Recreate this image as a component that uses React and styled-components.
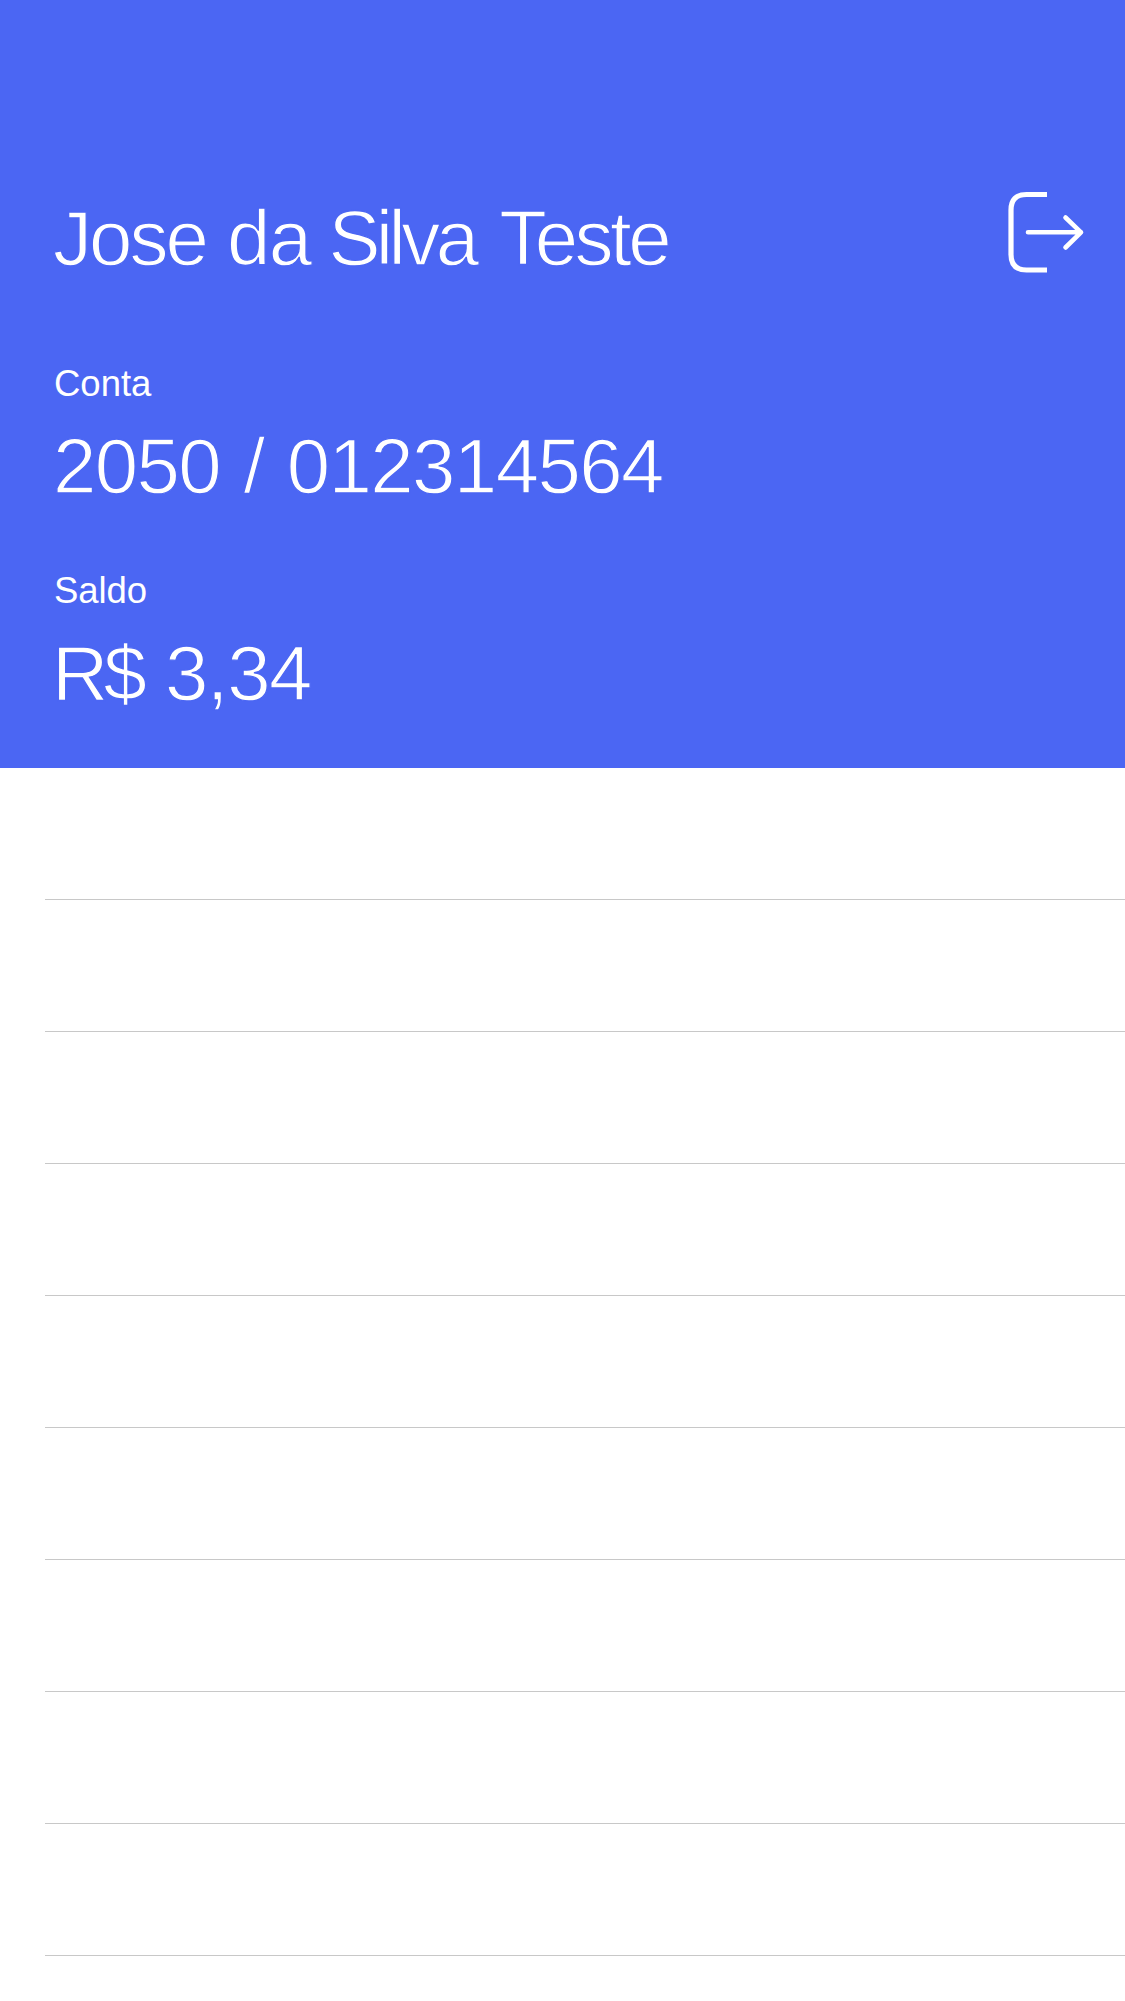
import React from "react";
import styled, { createGlobalStyle } from "styled-components";

const BLUE = "#4b66f3";

const GlobalStyle = createGlobalStyle`
  * { box-sizing: border-box; }
  body { margin: 0; background: #fff; }
`;

const Screen = styled.main`
  display: flex;
  flex-direction: column;
  width: 1125px;
  height: 2001px;
  overflow: hidden;
  background: #fff;
  font-family: "Liberation Sans", Arial, sans-serif;
`;

const Header = styled.header`
  display: flex;
  flex-direction: column;
  flex: none;
  height: 768px;
  padding: 191px 40px 0 53px;
  background: ${BLUE};
  color: #fff;
`;

const TopBar = styled.div`
  display: flex;
  flex: none;
  align-items: flex-start;
  justify-content: space-between;
  height: 170px;
`;

const LightText = styled.div`
  font-size: 78px;
  line-height: 94px;
  margin-left: ${(p) => p.$shift || 0}px;
  letter-spacing: ${(p) => p.$spacing}px;
  word-spacing: ${(p) => p.$word || 0}px;
  white-space: pre;
  -webkit-text-stroke: 1.3px ${BLUE};
`;

const Word = styled.span`
  letter-spacing: ${(p) => p.$spacing}px;
  margin-right: ${(p) => p.$after || 0}px;
`;

const Field = styled.section`
  display: flex;
  flex: none;
  flex-direction: column;
  margin-bottom: 55px;
`;

const Label = styled.div`
  font-size: 36.5px;
  line-height: 46px;
  margin-bottom: 12px;
  padding-left: 1px;
  letter-spacing: ${(p) => p.$spacing}px;
`;

const LogoutButton = styled.button`
  display: flex;
  width: 77px;
  height: 84px;
  padding: 0;
  border: 0;
  background: none;
  color: #fff;
`;

const List = styled.ul`
  display: flex;
  flex-direction: column;
  margin: 0;
  padding: 0 0 0 45px;
  list-style: none;
`;

const Row = styled.li`
  flex: none;
  height: 132px;
  border-bottom: 1px solid #c8c8c8;
`;

function LogoutIcon() {
  return (
    <svg width="77" height="84" viewBox="0 0 77 84" fill="none" stroke="currentColor">
      <path d="M39 3.5H18.5Q3 3.5 3 19V63.500Q3 79 18.500 79H39" strokeWidth="5.200" />
      <path d="M20 41.300H73M57.500 26.500L73 41.300L57.500 56.500" strokeWidth="4.600" strokeLinecap="round" strokeLinejoin="round" />
    </svg>
  );
}

export default function App() {
  return (
    <>
      <GlobalStyle />
      <Screen>
        <Header>
          <TopBar>
            <LightText $spacing={-2}>
              <Word $spacing={-3} $after={1.5}>Jose</Word>{" "}
              <Word $spacing={-1.5} $after={-2}>da</Word>{" "}
              <Word $spacing={-4.6} $after={5}>Silva</Word>{" "}
              <Word $spacing={-3.5}>Teste</Word>
            </LightText>
            <LogoutButton aria-label="Sair">
              <LogoutIcon />
            </LogoutButton>
          </TopBar>
          <Field>
            <Label $spacing={0}>Conta</Label>
            <LightText $spacing={-1.6} $word={3.2}>2050 / 012314564</LightText>
          </Field>
          <Field>
            <Label $spacing={-0.1}>Saldo</Label>
            <LightText $spacing={-1.4} $shift={-1}>
              <Word $spacing={-4.8} $after={2.5}>R$</Word> 3,34
            </LightText>
          </Field>
        </Header>
        <List>
          {Array.from({ length: 10 }, (_, i) => (
            <Row key={i} />
          ))}
        </List>
      </Screen>
    </>
  );
}
